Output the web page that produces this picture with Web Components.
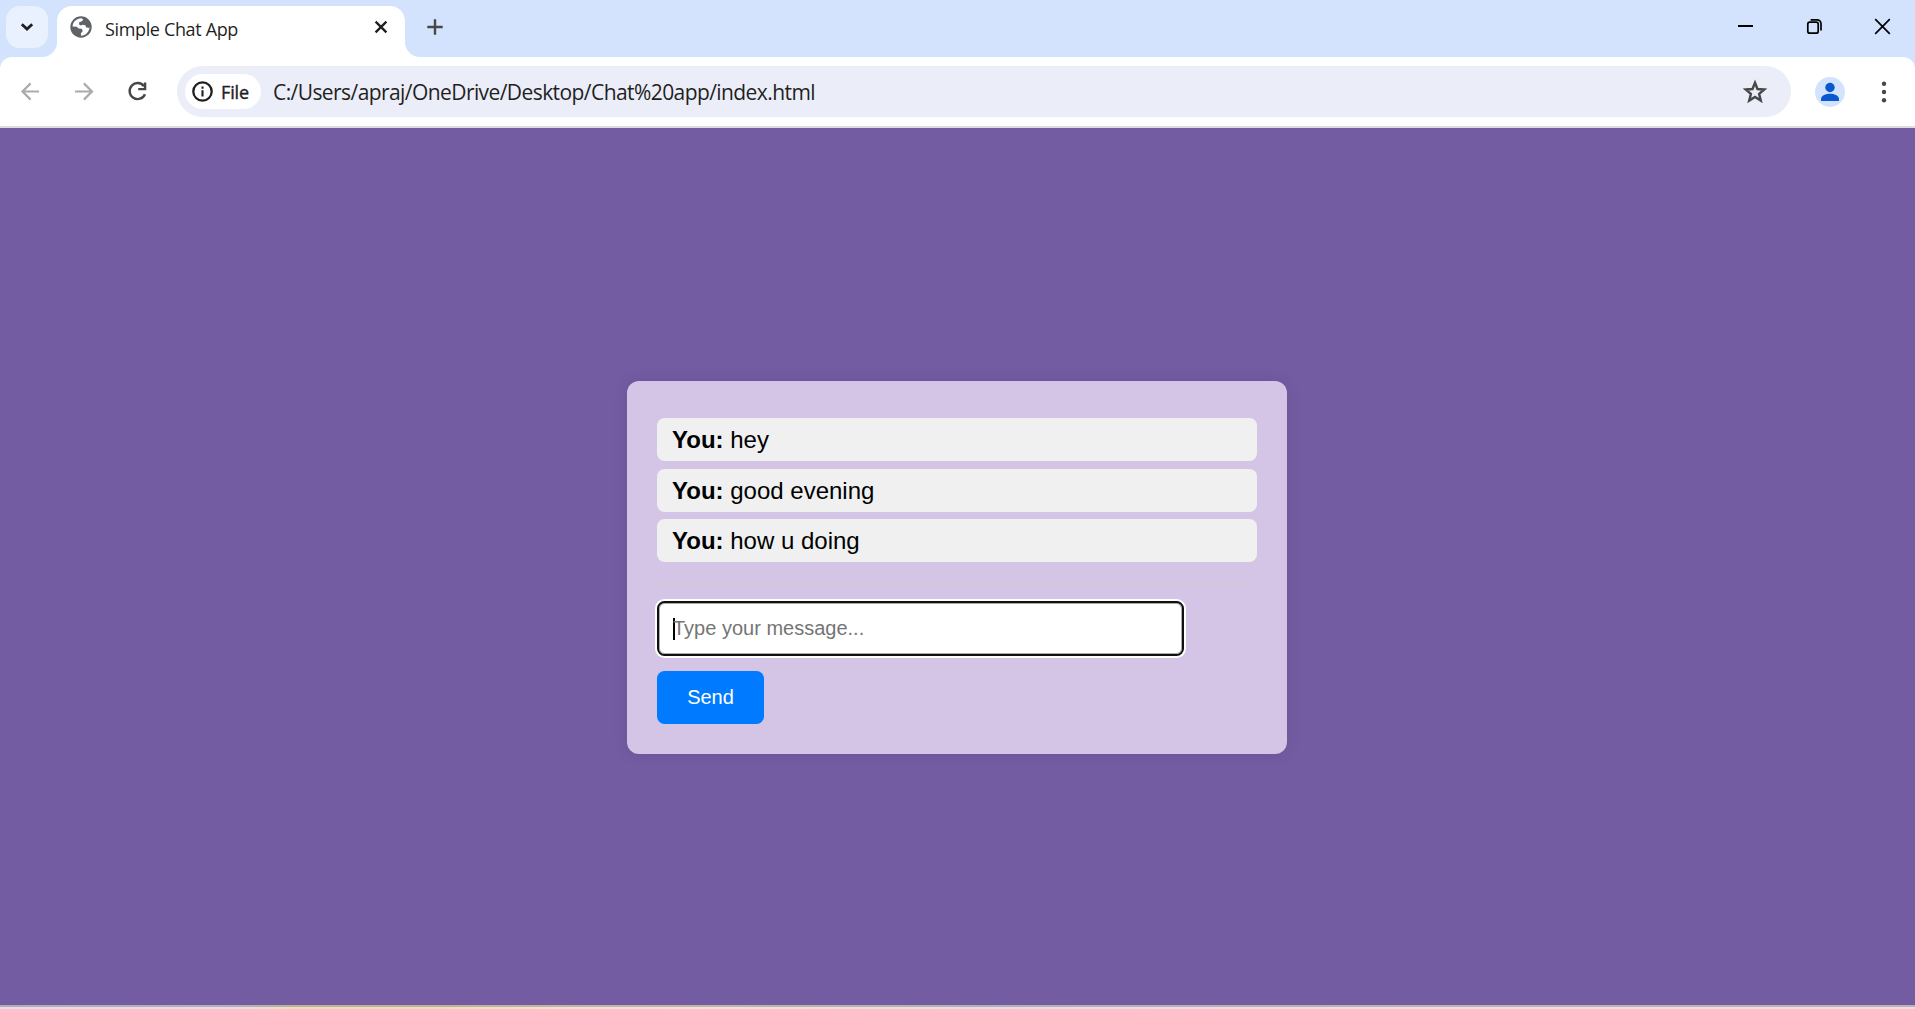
<!DOCTYPE html>
<html lang="en">
<head>
<meta charset="utf-8">
<title>Simple Chat App</title>
<style>
html,body{margin:0;height:100%;overflow:hidden}
body{display:flex;flex-direction:column;height:1009px;font-family:"Liberation Sans",Arial,sans-serif}
chat-page{flex:1}
</style>
</head>
<body>
<tab-strip><browser-tab>Simple Chat App</browser-tab></tab-strip>
<tool-bar><address-bar>C:/Users/apraj/OneDrive/Desktop/Chat%20app/index.html</address-bar></tool-bar>
<chat-page>
  <chat-card>
    <chat-message from="You:">hey</chat-message>
    <chat-message from="You:">good evening</chat-message>
    <chat-message from="You:">how u doing</chat-message>
  </chat-card>
</chat-page>
<window-edge></window-edge>
<script>
const define = (name, html, ready) => customElements.define(name, class extends HTMLElement {
  connectedCallback() {
    if (this.shadowRoot) return;
    this.attachShadow({ mode: 'open' }).innerHTML = html;
    if (ready) ready(this, this.shadowRoot);
  }
});

/* One line of text spread to a given width through letter-spacing. */
define('fit-text', `<style>:host{display:block;white-space:nowrap}span{display:inline-block}</style><span><slot></slot></span>`, (el, root) => {
  const span = root.querySelector('span');
  const n = Number(el.getAttribute('chars'));
  const w = Number(el.getAttribute('width'));
  requestAnimationFrame(() => { span.style.letterSpacing = ((w - span.getBoundingClientRect().width) / n) + 'px'; });
});

define('browser-tab', `<style>
:host{display:block;width:348px;height:51px}
.tab{position:relative;box-sizing:border-box;height:51px;padding:0 16px 9px 13px;display:flex;align-items:center;background:#fff;border-radius:15px 15px 0 0;color:#1f1f1f;font:18px "Open Sans","Noto Sans",sans-serif}
.tab::before,.tab::after{content:"";position:absolute;bottom:0;width:15px;height:15px}
.tab::before{left:-15px;background:radial-gradient(circle at 0 0,transparent 14.5px,#fff 15.5px)}
.tab::after{right:-15px;background:radial-gradient(circle at 100% 0,transparent 14.5px,#fff 15.5px)}
fit-text{flex:1;margin-left:13px;padding-top:3px}
svg{flex:none}
</style>
<div class="tab">
<svg width="22" height="22" viewBox="0 0 22 22"><circle cx="11" cy="11" r="10.7" fill="#5f6368"/><path fill="#fff" d="M12 2.4 13.3 4 11.4 5.6 9.2 6.3 9 8.6 11 9.4 12.6 8.7 15.4 9.2 16 11.3 18.8 12 19.6 11C19.4 15.8 15.8 19.6 11 19.7L10.8 17.4 12.8 15 11.7 12.8 8.6 12.4 6.8 10.7 2.6 10.6C2.8 5.8 7 2 12 2.4Z"/><path fill="#5f6368" d="M2.3 11.5 6.4 11.7 8 14 7.8 16.5 9.2 19.8 5 18.4Z"/></svg>
<fit-text width="133" chars="15"><slot></slot></fit-text>
<svg width="16" height="16" viewBox="0 0 16 16" style="margin-right:0"><path d="M2.6 2.6 13.4 13.4M13.4 2.6 2.6 13.4" stroke="#1f1f1f" stroke-width="2.3"/></svg>
</div>`);

define('tab-strip', `<style>
:host{display:flex;box-sizing:border-box;height:57px;flex:none;padding:6px 24px 0 6px;background:#d3e3fd;align-items:flex-start}
.search{width:42px;height:42px;border-radius:14px;background:#e9f1fe;margin-right:9px}
.plus{margin:12px 0 0 21px}
.win{margin-left:auto;display:flex;gap:51.5px;padding-top:12px}
svg{display:block}
</style>
<svg class="search" viewBox="0 0 42 42"><path d="M15.8 18.2 21 23 26.2 18.2" fill="none" stroke="#1f1f1f" stroke-width="2.8"/></svg>
<slot></slot>
<svg class="plus" width="18" height="18" viewBox="0 0 18 18"><path d="M9 1.3V16.7M1.3 9H16.7" stroke="#474747" stroke-width="2.4"/></svg>
<div class="win">
<svg width="17" height="17" viewBox="0 0 17 17"><path d="M1 8H16" stroke="#000" stroke-width="2"/></svg>
<svg width="17" height="17" viewBox="0 0 17 17"><g fill="none" stroke="#000" stroke-width="1.7"><rect x="1.8" y="4.2" width="10.4" height="11" rx="2"/><path d="M4.6 1.8H11a4 4 0 0 1 4 4v6.8"/></g></svg>
<svg width="17" height="17" viewBox="0 0 17 17"><path d="M1.2 1.2 15.8 15.8M15.8 1.2 1.2 15.8" stroke="#000" stroke-width="1.7"/></svg>
</div>`);

define('address-bar', `<style>
:host{display:flex;flex:1;box-sizing:border-box;height:51px;border-radius:26px;background:#ebeef8;padding:0 23px 0 8px;align-items:center;font:21px "Open Sans","Noto Sans",sans-serif;color:#1f1f1f}
.chip{display:flex;align-items:center;box-sizing:border-box;width:76px;height:35px;border-radius:18px;background:#fff;padding-left:7px;margin-right:12px;font-size:18px;font-weight:500}
.chip fit-text{margin-left:8px;-webkit-text-stroke:.4px #1f1f1f}
.url{flex:1}
svg{flex:none}
</style>
<div class="chip"><svg width="21" height="21" viewBox="0 0 21 21"><circle cx="10.5" cy="10.5" r="9.2" fill="none" stroke="#1f1f1f" stroke-width="2.3"/><path d="M10.5 9.3V15.5M10.5 5.6V7.7" stroke="#1f1f1f" stroke-width="2.1"/></svg><fit-text width="28" chars="4">File</fit-text></div>
<fit-text class="url" width="542" chars="53"><slot></slot></fit-text>
<svg width="26" height="26" viewBox="0 0 26 26"><path d="M13 3.7 15.5 10 22.3 10.5 17.1 14.9 18.8 21.6 13 18 7.2 21.6 8.9 14.9 3.7 10.5 10.5 10Z" fill="none" stroke="#474747" stroke-width="2.4"/></svg>`);

define('tool-bar', `<style>
:host{display:block;flex:none;height:71px;background:#d3e3fd}
.bar{display:flex;align-items:center;box-sizing:border-box;height:71px;padding:0 22px 0 20px;border-bottom:2px solid #dcdce1;background:#fff;border-radius:12px 12px 0 0}
svg{flex:none}
.nav{display:flex;gap:33px;margin-right:28px}
.nav svg:last-child{margin-left:-1px;margin-right:1px}
.avatar{margin:0 30px 0 24px}
</style>
<div class="bar">
<div class="nav">
<svg width="21" height="21" viewBox="0 0 21 21"><path d="M19 10.5H3M10.6 2.4 2.5 10.5 10.6 18.6" fill="none" stroke="#ababab" stroke-width="2.2"/></svg>
<svg width="21" height="21" viewBox="0 0 21 21"><path d="M1 10.5H17M9.9 2.4 18 10.5 9.9 18.6" fill="none" stroke="#ababab" stroke-width="2.2"/></svg>
<svg width="21" height="21" viewBox="0 0 21 21"><path d="M17 5.2A8 8 0 1 0 18 13.2" fill="none" stroke="#474747" stroke-width="2.4"/><path d="M18.1 1.4V8.1H11.2" fill="none" stroke="#474747" stroke-width="2.4"/></svg>
</div>
<slot></slot>
<svg class="avatar" width="30" height="30" viewBox="0 0 30 30"><circle cx="15" cy="15" r="15" fill="#d3e3fd"/><circle cx="15" cy="10.5" r="4.7" fill="#0b57d0"/><path d="M6 24v-2c0-3.5 5-5.3 9-5.3s9 1.8 9 5.3v2z" fill="#0b57d0"/></svg>
<svg width="18" height="22" viewBox="0 0 18 22"><g fill="#474747"><circle cx="9" cy="2.7" r="2.2"/><circle cx="9" cy="11" r="2.2"/><circle cx="9" cy="19.3" r="2.2"/></g></svg>
</div>`);

define('chat-page', `<style>
:host{display:flex;min-height:0;box-sizing:border-box;background:#745ca3;justify-content:center;align-items:flex-start;padding:253px 1px 0 0}
</style><slot></slot>`);

define('chat-message', `<style>
:host{display:block;box-sizing:border-box;height:43px;border-radius:7.5px;background:#f0f0f0;padding:0 15px;font-size:24px;line-height:43px;color:#000}
</style><b></b> <slot></slot>`, (el, root) => { root.querySelector('b').textContent = el.getAttribute('from'); });

define('chat-card', `<style>
:host{display:block;box-sizing:border-box;width:660px;height:373px;padding:30px;background:#d4c5e6;border-radius:12px;box-shadow:0 0 15px rgba(0,0,0,.1)}
.log{display:flex;flex-direction:column;gap:7.5px;box-sizing:border-box;height:175px;padding-top:7px;border-bottom:1px solid #cccccf}
.field{box-sizing:border-box;width:527px;height:55px;margin-top:15px;border:2px solid #101010;border-radius:7.5px;background:#fff;box-shadow:0 0 0 2px #fff,inset 0 0 0 1px #aaa;padding:0 14px;display:flex;align-items:center;color:#757575;font-size:20px}
.caret{width:2px;height:22px;background:#000;margin-right:-2px}
button{display:block;margin-top:15px;width:107px;height:53px;border:0;border-radius:7.5px;background:#007bff;color:#fff;font:20px "Liberation Sans",Arial,sans-serif;padding:0}
</style>
<div class="log"><slot></slot></div>
<div class="field"><i class="caret"></i><span>Type your message...</span></div>
<button>Send</button>`);

define('window-edge', `<style>
:host{display:block;flex:none;height:4px;background:linear-gradient(90deg,#e3dde8 0,#e6dde4 240px,#ecdfb8 300px,#ecdfb8 440px,#f3e2d2 580px,#f3e2d6 700px,#e4dde2 980px,#f0dce2 1400px,#f0dce2 100%)}
i{display:block;height:2px;background:linear-gradient(90deg,#b3acb8 0,#b8aeb6 240px,#bfb299 300px,#bfb299 440px,#c2b3a8 580px,#c2b3aa 700px,#b5afb5 980px,#bfb0b5 1400px,#bfb0b5 100%)}
</style><i></i>`);
</script>
</body>
</html>
